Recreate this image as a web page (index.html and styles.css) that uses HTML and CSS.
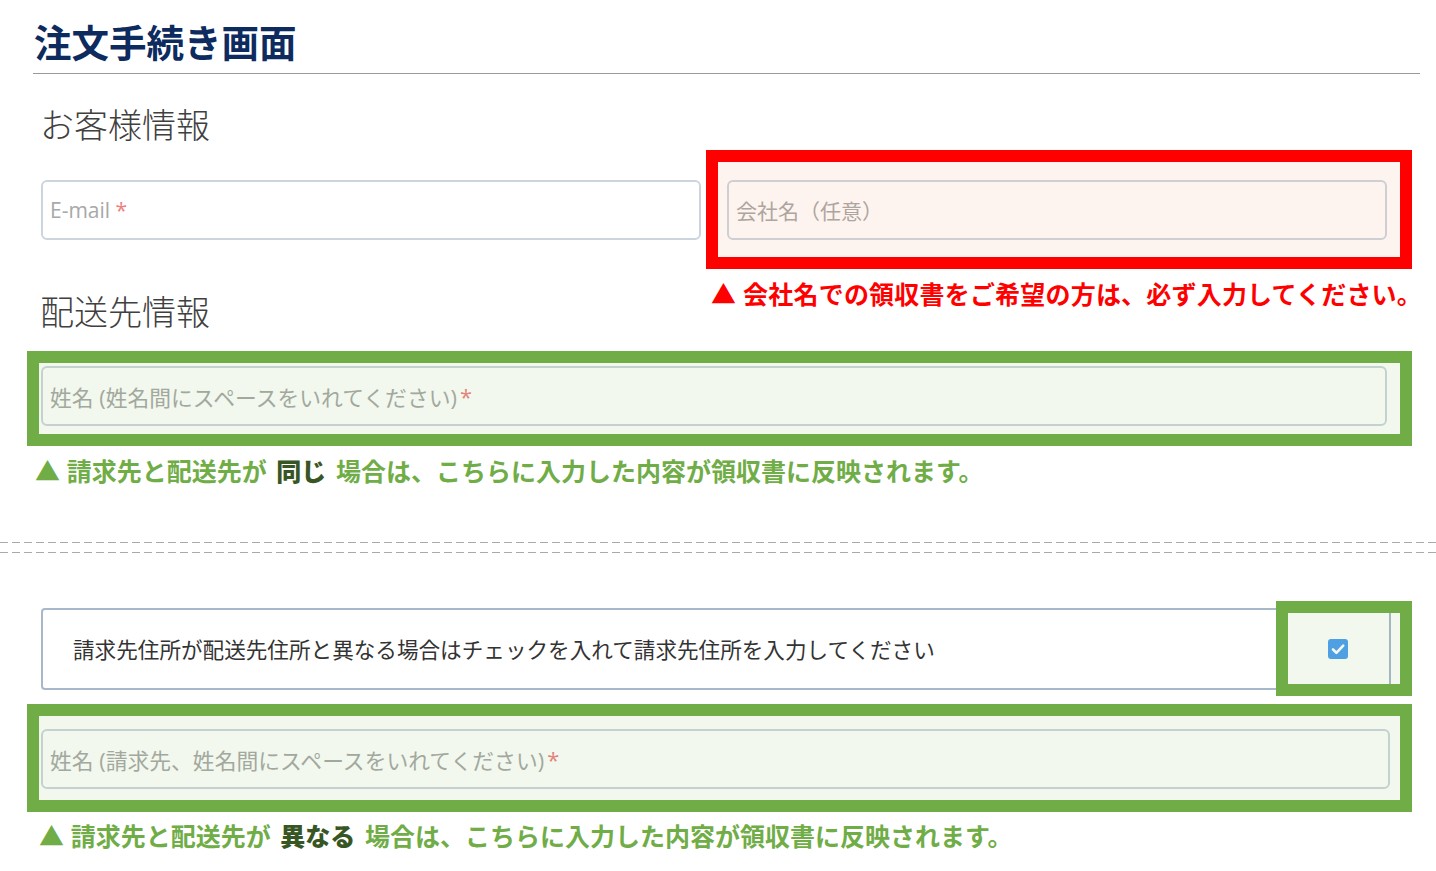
FILE: index.html
```html
<!DOCTYPE html>
<html lang="ja">
<head>
  <meta charset="UTF-8">
  <meta name="viewport" content="width=device-width, initial-scale=1.0">
  <title>注文手続き画面</title>
  <link rel="stylesheet" href="styles.css">
</head>
<body>
  <div class="page">
    <h1 class="page-title">注文手続き画面</h1>

    <div class="form">
      <h2 class="section-title section-title--customer">お客様情報</h2>
      <div class="field-row">
        <div class="field">
          <div class="input"><span>E-mail</span>&nbsp;<span class="req">*</span></div>
        </div>
        <div class="field">
          <div class="input"><span>会社名（任意）</span></div>
          <div class="mark mark--red mark--company"></div>
          <p class="note note--red">▲ 会社名での領収書をご希望の方は、必ず入力してください。</p>
        </div>
      </div>

      <h2 class="section-title section-title--ship">配送先情報</h2>
      <div class="field field--ship">
        <div class="input input--name"><span>姓名 (姓名間にスペースをいれてください)</span><span class="req">*</span></div>
        <div class="mark mark--green mark--ship"></div>
      </div>
      <p class="note note--green note--ship">▲ 請求先と配送先が <strong class="gap">同じ</strong> 場合は、こちらに入力した内容が領収書に反映されます。</p>
    </div>

    <div class="divider"></div>

    <div class="form">
      <div class="check-row">
        <div class="check-text">請求先住所が配送先住所と異なる場合はチェックを入れて請求先住所を入力してください</div>
        <div class="check-cell">
          <svg width="20" height="20" viewBox="0 0 20 20">
            <rect width="20" height="20" rx="3" fill="#4b9ff2"/>
            <path d="M5 10.5l3.4 3.3L15.2 6.6" fill="none" stroke="#fff" stroke-width="2.6" stroke-linecap="round" stroke-linejoin="round"/>
          </svg>
        </div>
        <div class="mark mark--green mark--check"></div>
      </div>

      <div class="field field--billing">
        <div class="input input--name"><span>姓名 (請求先、姓名間にスペースをいれてください)</span><span class="req">*</span></div>
        <div class="mark mark--green mark--billing"></div>
      </div>
      <p class="note note--green note--billing">▲ 請求先と配送先が <strong class="gap">異なる</strong> 場合は、こちらに入力した内容が領収書に反映されます。</p>
    </div>
  </div>
</body>
</html>
```

FILE: styles.css
```css
body { margin: 0; background: #fff; font-family: "Open Sans", "Noto Sans CJK JP", sans-serif; }
.page { padding: 19px 16px 0 33px; }
.page-title { margin: 0; padding: 0 0 10px 1px; border-bottom: 1px solid #9a9a9a; font: 700 37.5px/44px "Noto Sans CJK JP", sans-serif; color: #0d2b5e; }

.form { margin-left: 8px; width: 1350px; }
.section-title { margin: 0 0 0 -1px; font: 300 34px/40px "Noto Sans CJK JP", sans-serif; color: #404040; }
.section-title--customer { margin-top: 30px; }
.section-title--ship { margin-top: 51px; }

.field-row { display: grid; grid-template-columns: 660px 660px; column-gap: 26px; margin-top: 36px; }
.field { position: relative; }
.field--ship { margin-top: 35px; width: 1346px; }
.field--billing { margin-top: 39px; width: 1349px; }

.input { height: 60px; box-sizing: border-box; display: flex; align-items: center; padding: 0 7px; border: 2px solid #ccd5df; border-radius: 6px; background: #fff; font-size: 21px; color: #a8a8a8; white-space: nowrap; }
.input--name { font-size: 21.8px; }
.input--name .req { margin-left: 3px; }
.req { color: #ef8080; }

/* annotation frames drawn over the form */
.mark { position: absolute; border: 12px solid; pointer-events: none; }
.mark--red { border-color: #ff0000; background: rgba(240, 150, 100, 0.1); }
.mark--green { border-color: #70ad47; background: rgba(112, 173, 71, 0.09); }
.mark--company { left: -21px; top: -30px; right: -25px; bottom: -29px; }
.mark--ship { left: -14px; top: -15px; right: -25px; bottom: -20px; }
.mark--billing { left: -14px; top: -25px; right: -22px; bottom: -23px; }
.mark--check { right: -23px; top: -9px; bottom: -8px; width: 136px; box-sizing: border-box; }

.note { margin: 0; font: 700 25px/30px "Noto Sans CJK JP", sans-serif; white-space: nowrap; word-spacing: 1px; }
.note--red { position: absolute; left: -16px; top: calc(100% + 38px); color: #ff0000; letter-spacing: 0.2px; }
.note--green { color: #70ad47; }
.note--green strong { color: #375623; }
.note .gap { margin: 0 3px; }
.note--ship { margin: 29px 0 0 -6px; }
.note--billing { margin: 31px 0 0 -2px; }

.divider {
  height: 11px;
  margin: 57px -16px 0 -33px;
  background:
    repeating-linear-gradient(90deg, #aaa 0 8px, transparent 8px 12px) 0 0 / 100% 1px no-repeat,
    repeating-linear-gradient(90deg, #aaa 0 8px, transparent 8px 12px) 0 100% / 100% 1px no-repeat;
}

.check-row { position: relative; display: flex; height: 82px; box-sizing: border-box; margin-top: 55px; border: 2px solid #a8b8cb; border-radius: 4px; }
.check-text { flex: 1; display: flex; align-items: center; padding: 0 0 2px 30px; font: 21.6px "Noto Sans CJK JP", sans-serif; color: #333; }
.check-cell { width: 102px; display: flex; align-items: center; justify-content: center; }
.check-cell svg { display: block; }
```
